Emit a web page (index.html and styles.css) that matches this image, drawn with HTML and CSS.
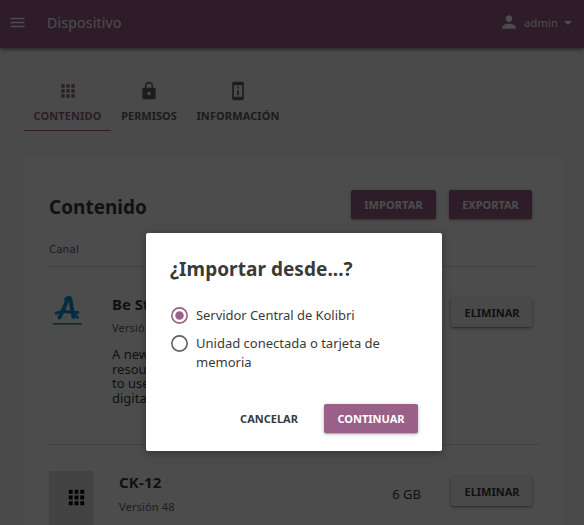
FILE: index.html
```html
<!DOCTYPE html>
<html lang="es">
<head>
<meta charset="utf-8">
<title>Dispositivo</title>
<link rel="stylesheet" href="styles.css">
</head>
<body>
<header class="appbar">
  <svg class="menu-icon" viewBox="0 0 24 24"><path d="M3 18h18v-2H3v2zm0-5h18v-2H3v2zm0-7v2h18V6H3z"/></svg>
  <span class="appbar-title">Dispositivo</span>
  <div class="user">
    <svg class="user-icon" viewBox="0 0 24 24"><path d="M12 12c2.21 0 4-1.79 4-4s-1.79-4-4-4-4 1.79-4 4 1.79 4 4 4zm0 2c-2.67 0-8 1.34-8 4v2h16v-2c0-2.66-5.33-4-8-4z"/></svg>
    <span class="user-name">admin</span>
    <svg class="caret" viewBox="0 0 8 4"><path d="M0 0h8L4 4z"/></svg>
  </div>
</header>
<nav class="tabs">
  <a class="tab tab-content active"><svg viewBox="0 0 24 24"><path d="M4 8h4V4H4v4zm6 12h4v-4h-4v4zm-6 0h4v-4H4v4zm0-6h4v-4H4v4zm6 0h4v-4h-4v4zm6-10v4h4V4h-4zm-6 4h4V4h-4v4zm6 6h4v-4h-4v4zm0 6h4v-4h-4v4z"/></svg><span>CONTENIDO</span></a>
  <a class="tab tab-permissions"><svg viewBox="0 0 24 24"><path d="M18 8h-1V6c0-2.760-2.240-5-5-5S7 3.240 7 6v2H6c-1.100 0-2 .9-2 2v10c0 1.100.9 2 2 2h12c1.100 0 2-.9 2-2V10c0-1.100-.9-2-2-2zm-6 9c-1.100 0-2-.9-2-2s.9-2 2-2 2 .9 2 2-.9 2-2 2zm3.100-9H8.900V6c0-1.710 1.390-3.100 3.100-3.100s3.100 1.390 3.100 3.100v2z"/></svg><span>PERMISOS</span></a>
  <a class="tab tab-info"><svg viewBox="0 0 24 24"><path d="M13 7h-2v2h2V7zm0 4h-2v6h2v-6zm4-9.990L7 1c-1.100 0-2 .9-2 2v18c0 1.100.9 2 2 2h10c1.100 0 2-.9 2-2V3c0-1.100-.9-1.990-2-1.990zM17 19H7V5h10v14z"/></svg><span>INFORMACIÓN</span></a>
</nav>
<main class="card">
  <div class="card-head">
    <h1>Contenido</h1>
    <div class="head-actions">
      <button class="btn primary import">IMPORTAR</button>
      <button class="btn primary export">EXPORTAR</button>
    </div>
  </div>
  <div class="column-label">Canal</div>
  <section class="channel first">
    <div class="thumb">
      <svg class="school-logo" viewBox="0 0 29 32"><g fill="none" stroke="#1590d8" stroke-linecap="round" stroke-linejoin="round"><path stroke-width="4" d="M6.500 23.500C10 17 12.500 10 15 4L17 4L20.500 23"/><path stroke-width="2.800" d="M3 19.200L9 17.500L25 18.500"/><path stroke-width="2.800" d="M20 19L24.500 23.500M12.500 5L17 4.500"/></g><path stroke="#1590d8" stroke-width="1.600" d="M0 29.800h29"/></svg>
    </div>
    <div class="details">
      <h2>Be St</h2>
      <div class="version">Versió</div>
      <p>A new<br>resou<br>to use<br>digita</p>
    </div>
    <button class="btn secondary">ELIMINAR</button>
  </section>
  <section class="channel second">
    <div class="thumb placeholder"><svg viewBox="0 0 24 24"><path d="M4 8h4V4H4v4zm6 12h4v-4h-4v4zm-6 0h4v-4H4v4zm0-6h4v-4H4v4zm6 0h4v-4h-4v4zm6-10v4h4V4h-4zm-6 4h4V4h-4v4zm6 6h4v-4h-4v4zm0 6h4v-4h-4v4z"/></svg></div>
    <div class="details">
      <h2>CK-12</h2>
      <div class="version">Versión 48</div>
    </div>
    <div class="size">6 GB</div>
    <button class="btn secondary">ELIMINAR</button>
  </section>
</main>
<div class="overlay">
  <form class="modal">
    <h1>¿Importar desde...?</h1>
    <label class="option"><svg class="radio selected" viewBox="0 0 16 16"><circle class="ring" cx="8" cy="8" r="7.200"/><circle class="dot" cx="8" cy="8" r="4"/></svg><span class="tight">Servidor Central de Kolibri</span></label>
    <label class="option"><svg class="radio" viewBox="0 0 16 16"><circle class="ring" cx="8" cy="8" r="7.200"/></svg><span>Unidad conectada o tarjeta de memoria</span></label>
    <div class="modal-actions">
      <button type="button" class="btn flat">CANCELAR</button>
      <button type="button" class="btn primary continue">CONTINUAR</button>
    </div>
  </form>
</div>
</body>
</html>
```
FILE: styles.css
```css
* { box-sizing: border-box; }
html, body { height: 100%; overflow: hidden; }
body {
  margin: 0;
  background: #f8f8f8;
  color: #3a3a3a;
  font-family: "Noto Sans", sans-serif;
  font-size: 13px;
}
h1, h2, p { margin: 0; }
svg { display: block; flex: none; fill: currentColor; }

.appbar {
  display: flex;
  align-items: center;
  height: 48px;
  padding: 0 12px 3px 8px;
  background: #996189;
  color: #fff;
  box-shadow: 0 1px 5px rgba(0,0,0,.3), 0 2px 2px rgba(0,0,0,.2);
}
.menu-icon { width: 19px; height: 19px; }
.appbar-title { margin-left: 20px; font-size: 14px; letter-spacing: .22px; }
.user { display: flex; align-items: center; margin-left: auto; }
.user-icon { width: 20px; height: 20px; margin-top: -2px; }
.user-name { margin: 0 6px 0 5px; font-size: 11px; letter-spacing: .2px; }
.caret { width: 8px; height: 4px; }

.tabs { display: flex; height: 83px; margin: 0 24px; padding-top: 32px; }
.tab {
  display: flex;
  flex-direction: column;
  align-items: center;
  height: 51px;
  padding-top: 1px;
  font-size: 11px;
  font-weight: 700;
  line-height: 15px;
  color: #616161;
}
.tab svg { width: 20px; height: 20px; margin-bottom: 7px; }
.tab-content { width: 87px; letter-spacing: .1px; }
.tab-permissions { width: 76px; }
.tab-info { width: 102px; letter-spacing: .1px; }
.active { color: #996189; border-bottom: 1px solid #996189; }

.card {
  height: 367px;
  margin: 27px 20px 0 24px;
  padding: 32px 25px 0;
  overflow: hidden;
  background: #fff;
  border-radius: 2px;
}
.card-head { display: flex; justify-content: space-between; }
.card-head h1 { margin-top: 4px; font-size: 19px; line-height: 26px; }
.head-actions { display: flex; gap: 13px; margin-right: 7px; }

.btn {
  height: 29px;
  padding: 0;
  border: 0;
  border-radius: 2px;
  font: 700 11px/29px "Noto Sans", sans-serif;
  text-align: center;
}
.primary {
  background: #996189;
  color: #fff;
  box-shadow: 0 1px 4px rgba(0,0,0,.25), 0 1px 1px rgba(0,0,0,.2);
}
.import { width: 85px; letter-spacing: .1px; }
.export { width: 83px; }
.secondary {
  width: 81px;
  margin-left: auto;
  padding-left: 1px;
  background: #f5f5f5;
  color: #3a3a3a;
  box-shadow: 0 1px 4px rgba(0,0,0,.35), 0 1px 1px rgba(0,0,0,.2);
}
.column-label {
  height: 47px;
  padding-top: 21px;
  border-bottom: 1px solid #dedede;
  font-size: 11px;
  line-height: 15px;
  letter-spacing: .2px;
  color: #616161;
}
.channel { display: flex; align-items: flex-start; padding-right: 7px; }
.first { height: 178px; padding-top: 27px; border-bottom: 1px solid #dedede; }
.first .thumb { width: 63px; padding-left: 4px; }
.school-logo { width: 29px; height: 32px; }
.channel h2 { font-size: 15px; line-height: 20px; }
.version { margin-top: 6px; font-size: 11px; line-height: 15px; letter-spacing: .15px; color: #616161; }
.details p { margin-top: 12px; line-height: 14.600px; }
.first .btn { margin-top: 4px; }
.second { height: 80px; padding-top: 26px; }
.placeholder {
  width: 44px;
  height: 54px;
  margin-right: 26px;
  padding: 15px 0 0 16px;
  background: #e0e0e0;
  color: #000;
}
.placeholder svg { width: 23px; height: 23px; }
.second .details { padding-top: 1px; }
.second h2 { letter-spacing: .2px; }
.second .version { margin-top: 7px; }
.second .btn { margin-top: 6px; margin-left: 30px; }
.size { margin: 14px 0 0 auto; line-height: 18px; }

.overlay {
  position: absolute;
  inset: 0;
  display: flex;
  justify-content: center;
  align-items: flex-start;
  padding: 233px 0 0 4px;
  background: rgba(0,0,0,.7);
}
.modal {
  width: 296px;
  height: 218px;
  padding: 23px 24px;
  background: #fff;
  border-radius: 2px;
  box-shadow: 0 2px 8px rgba(0,0,0,.35);
}
.modal h1 { margin-bottom: 24px; font-size: 19px; line-height: 26px; letter-spacing: .05px; }
.option { display: flex; width: 250px; line-height: 19px; margin-bottom: 9px; }
.radio { width: 17px; height: 17px; margin: 1px 8px 0 1px; fill: none; color: #616161; }
.option span { width: 200px; }
.option .tight { letter-spacing: -.05px; }
.ring { stroke: currentColor; stroke-width: 1.500; }
.selected { color: #996189; }
.dot { fill: currentColor; }
.modal-actions { display: flex; justify-content: flex-end; margin-top: 32px; }
.flat { width: 84px; margin-right: 13px; background: none; color: #3a3a3a; }
.continue { width: 94px; }
```
